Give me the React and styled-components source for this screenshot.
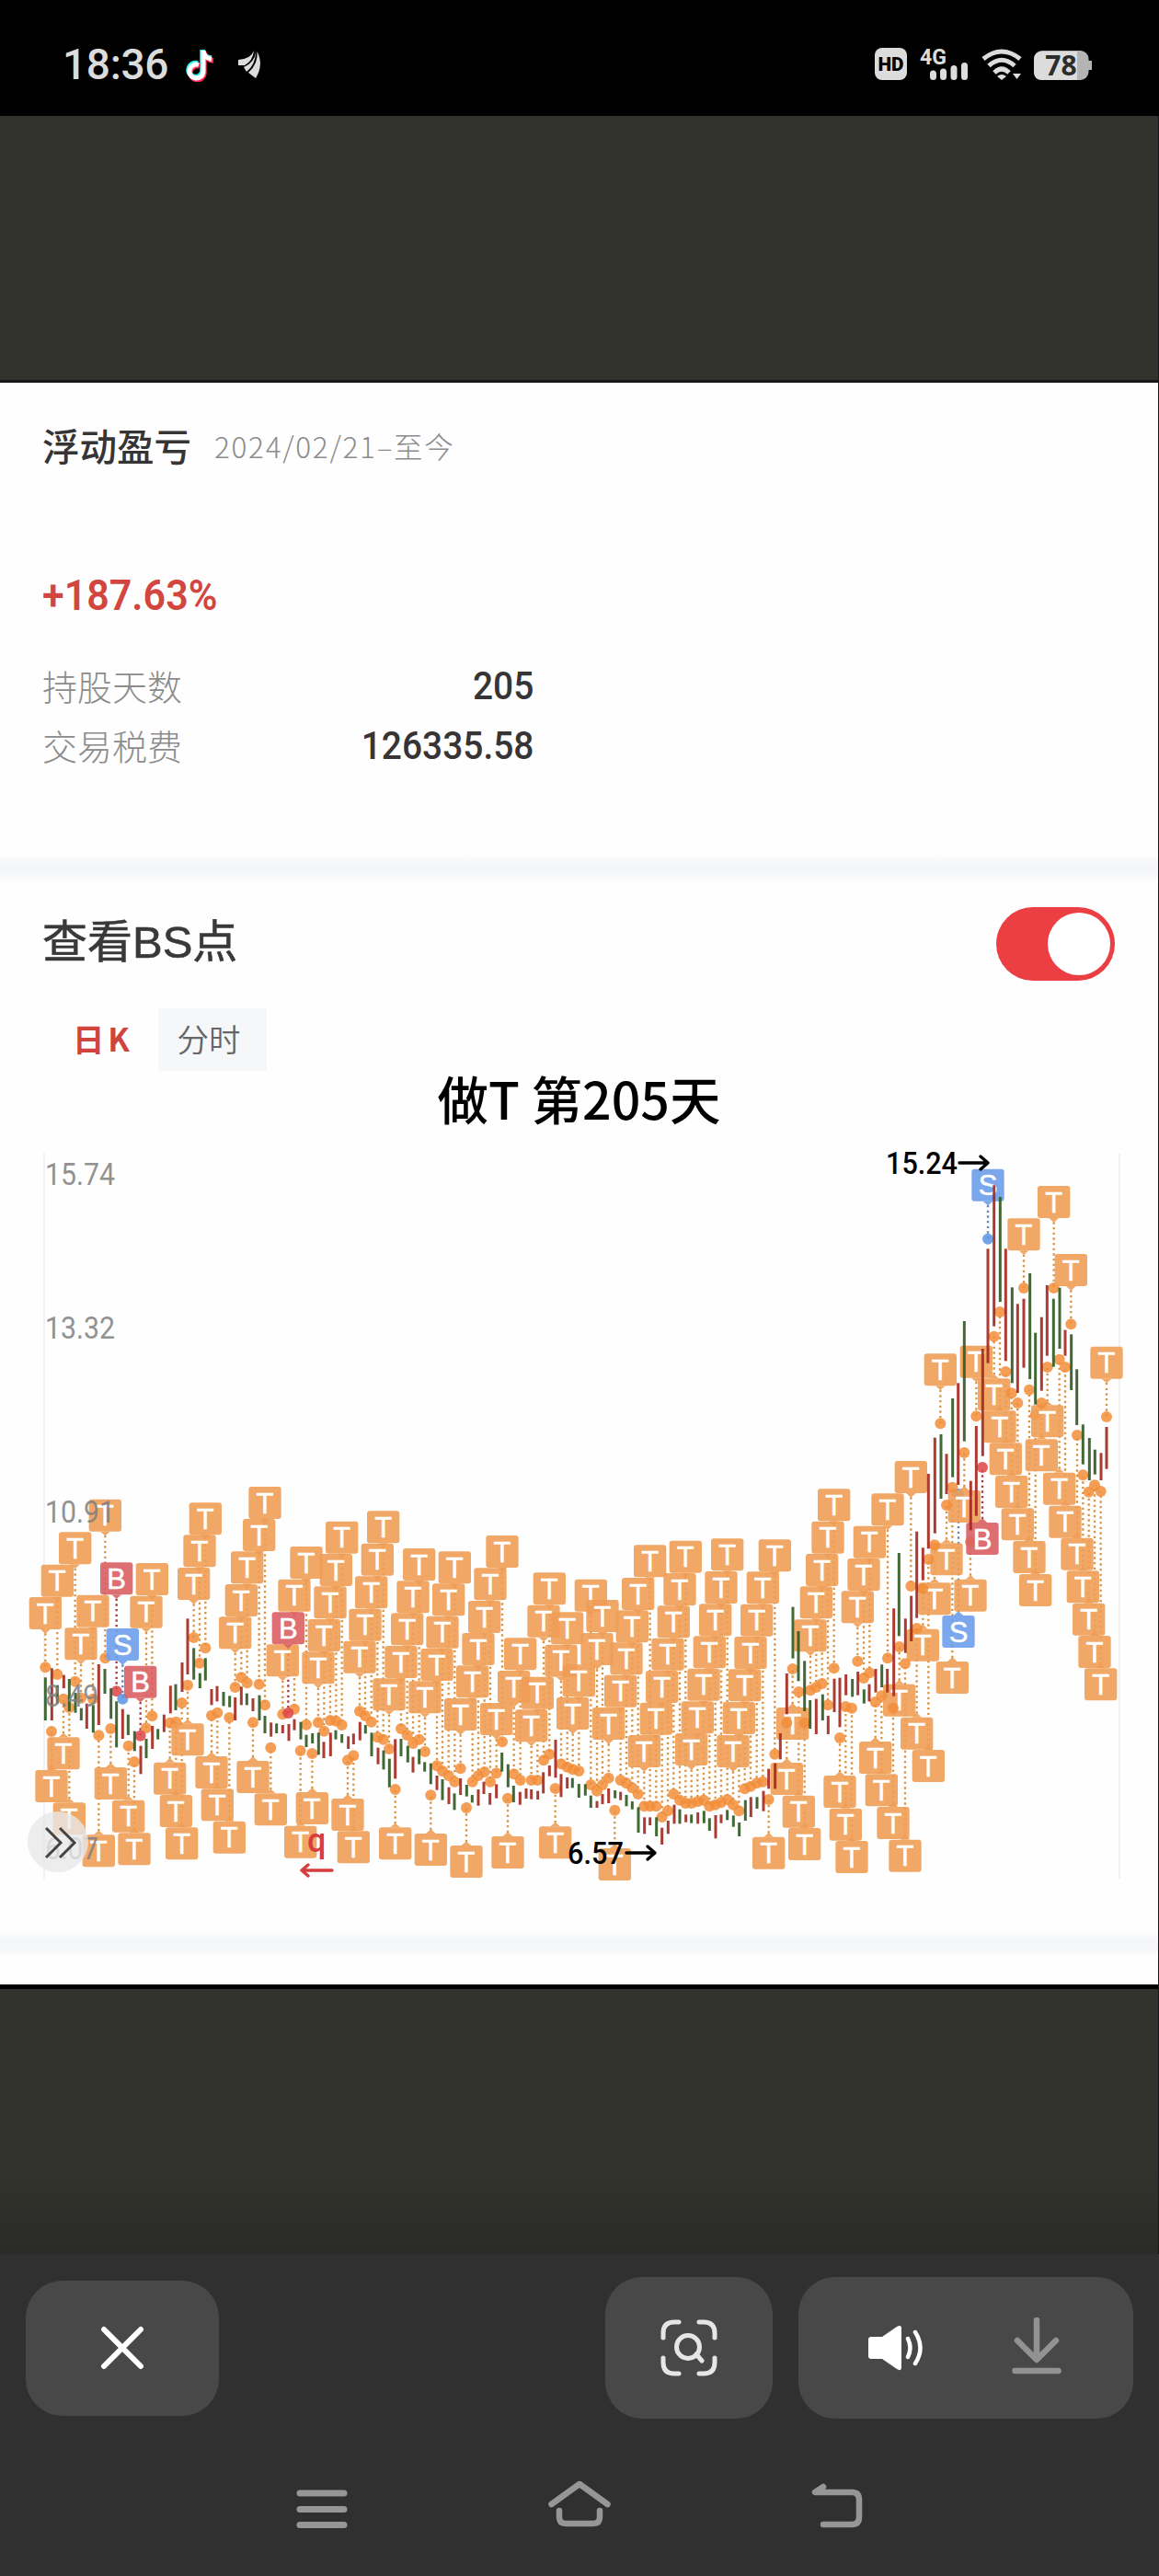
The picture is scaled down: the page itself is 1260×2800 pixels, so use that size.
import React, { useState } from "react";
import styled, { createGlobalStyle } from "styled-components";

const GlobalStyle = createGlobalStyle`
  * {
    box-sizing: border-box;
  }

  body {
    margin: 0;
    background: #303030;
    font-family: Roboto, "Noto Sans CJK SC", sans-serif;
  }
`;

const Screen = styled.div`
  display: flex;
  flex-direction: column;
  width: 1260px;
  height: 2800px;
  overflow: hidden;
  background: #303030;
`;

const StatusBar = styled.header`
  display: flex;
  justify-content: space-between;
  height: 126px;
  padding: 14px 73px 0 68px;
  background: #000;
  color: #dcdcdc;
`;

const StatusGroup = styled.div`
  display: flex;
  align-items: center;
`;

const Clock = styled.span`
  width: 132px;
  font-size: 46px;
  font-weight: 500;
  line-height: 1;
  letter-spacing: -0.3px;
  white-space: nowrap;
`;

const Viewer = styled.main`
  height: 2324px;
  padding-top: 287px;
  border-right: 1px solid #161616;
  background: linear-gradient(#33332e 0, #33332e 2230px, #2a2a26 2324px);
`;

const Sheet = styled.section`
  height: 1749px;
  border-top: 3px solid #17171a;
  border-bottom: 5px solid #000;
  background: #fefefe;
`;

const Summary = styled.section`
  display: flex;
  flex-direction: column;
  height: 513px;
  padding: 40px 0 0 46px;
`;

const Heading = styled.div`
  display: flex;
  align-items: center;
  gap: 25px;
  height: 56px;
`;

const Title = styled.h2`
  margin: 0;
  color: #363435;
  font-family: "Noto Sans CJK SC", sans-serif;
  font-size: 40.5px;
  font-weight: 500;
  line-height: 56px;
`;

const Period = styled.span`
  color: #8c8c8c;
  font-family: "Noto Sans CJK SC", sans-serif;
  font-size: 31.5px;
  font-weight: 300;
  line-height: 52px;
  letter-spacing: 1.7px;
  white-space: nowrap;
`;

const Profit = styled.div`
  margin-top: 107px;
  color: #d2463f;
  font-size: 46px;
  font-weight: 600;
  line-height: 56px;
  transform: scaleX(0.935);
  transform-origin: left;
`;

const Stats = styled.dl`
  display: flex;
  flex-direction: column;
  width: 534px;
  margin: 37px 0 0;
`;

const StatRow = styled.div`
  display: flex;
  justify-content: space-between;
  align-items: center;
  height: 65px;
`;

const StatName = styled.dt`
  color: #8c8c8c;
  font-family: "Noto Sans CJK SC", sans-serif;
  font-size: 38px;
  font-weight: 300;
  line-height: 50px;
`;

const StatValue = styled.dd`
  margin: 0;
  color: #363435;
  font-size: 43px;
  font-weight: 500;
  line-height: 50px;
  transform: scaleX(0.905);
  transform-origin: right;
`;

const Divider = styled.div`
  height: 30px;
  background: linear-gradient(#fefefe, #f4f6f9 35%, #f4f6f9 65%, #fefefe);
`;

const SwitchRow = styled.div`
  display: flex;
  justify-content: space-between;
  align-items: center;
  height: 80px;
  margin-top: 27px;
  padding: 0 47px 0 46px;
`;

const SwitchLabel = styled.h2`
  margin: 0;
  padding-bottom: 4px;
  color: #3a3839;
  font-family: "Liberation Sans", "Noto Sans CJK SC", sans-serif;
  font-size: 49px;
  font-weight: 400;
  line-height: 70px;
  -webkit-text-stroke: 0.6px #3a3839;
`;

const Toggle = styled.button`
  display: flex;
  justify-content: ${({ $on }) => ($on ? "flex-end" : "flex-start")};
  align-items: center;
  width: 129px;
  height: 80px;
  padding: 0 5px;
  border: none;
  border-radius: 40px;
  background: ${({ $on }) => ($on ? "#eb3f43" : "#ccc")};
`;

const Knob = styled.span`
  width: 68px;
  height: 68px;
  border-radius: 50%;
  background: #fff;
`;

const Tabs = styled.div`
  display: flex;
  width: 242px;
  height: 68px;
  margin: 30px 0 0 48px;
  background: #f6f7f9;
`;

const Tab = styled.button`
  width: ${({ $active }) => ($active ? "124px" : "118px")};
  padding: 0 ${({ $active }) => ($active ? "0" : "8px")} 4px 0;
  border: none;
  background: ${({ $active }) => ($active ? "#fefefe" : "transparent")};
  color: ${({ $active }) => ($active ? "#cf453e" : "#666")};
  font-family: "Noto Sans CJK SC", sans-serif;
  font-size: 34.5px;
  font-weight: ${({ $active }) => ($active ? 600 : 350)};
  word-spacing: -4px;
`;

const ChartTitle = styled.h1`
  height: 66px;
  margin: 0;
  color: #000;
  font-family: "Noto Sans CJK SC", sans-serif;
  font-size: 55.5px;
  font-weight: 500;
  line-height: 58px;
  text-align: center;
`;

const Chart = styled.svg`
  display: block;
  width: 1259px;
  height: 868px;
`;

const Toolbar = styled.div`
  display: flex;
  align-items: center;
  gap: 28px;
  height: 204px;
  padding: 0 28px;
`;

const ToolButton = styled.button`
  display: flex;
  justify-content: center;
  align-items: center;
  gap: 93px;
  width: ${({ $width }) => $width}px;
  height: ${({ $height }) => $height || 154}px;
  margin-right: ${({ $push }) => ($push ? "auto" : "0")};
  padding: 0 ${({ $shift }) => $shift || 0}px 0 0;
  border: none;
  border-radius: 40px;
  background: #484848;
`;

const NavBar = styled.nav`
  display: flex;
  justify-content: space-between;
  height: 146px;
  padding: 40px 321px 0;
`;

// Bars are "x low high colour", marks are "kind x box dot".
// Every block uses its own origin and three units per pixel.
const blocks = [
  {
    x: 0,
    y: 330,
    marks: `T 343 209 727,T 245 316 803,T 187 422 780,T 148 528 757,B 380 415 835,T 496 417 916,
      T 303 521 860,T 264 628 857,T 477 524 955,S 400 630 860,B 458 752 980,
      T 670 220 694,T 651 325 743,T 632 432 660,T 864 168 880,T 845 273 812,T 806 379 808,
      T 787 486 790,T 767 592 822,T 207 985 860,T 168 1092 966,T 226 1198 888,T 322 1303 979,
      T 361 1083 957,T 419 1190 1013,T 438 1297 1065,T 554 1067 938,T 574 1173 935,
      T 593 1279 873,T 612 940 815,T 690 1047 914,T 709 1153 905,T 748 1259 921,
      T 825 1062 937,T 883 1168 1019,T 980 1274 1029,T 960 470 893,T 922 682 910,B 940 577 906`,
    bars: `148 790 930 g,169 760 930 r,187 815 875 g,208 782 825 r,226 795 900 g,246 840 905 g,
      265 890 930 g,283 875 957 r,304 880 970 g,322 747 945 r,342 762 843 g,362 825 925 g,
      380 868 1018 g,400 893 990 r,418 911 978 g,439 965 1030 g,459 1013 1105 r,477 990 1053 g,
      497 948 1023 r,515 958 992 g,535 911 968 r,556 817 907 r,573 812 897 g,594 741 837 r,
      612 598 780 r,632 694 797 g,652 776 825 g,670 727 800 g,690 828 880 r,708 818 868 r,
      729 837 883 g,749 850 887 g,767 855 930 r,787 820 880 r,805 842 880 g,825 858 900 r,
      846 848 930 g,864 915 972 g,884 937 983 r,902 940 972 g,922 945 972 r,942 942 997 r,
      960 926 962 r,981 935 992 g`,
  },
  {
    x: 300,
    y: 370,
    marks: `T 99 243 824,T 215 161 825,T 196 267 812,T 177 373 810,T 157 480 845,T 138 586 817,
      T 350 127 872,T 331 233 865,T 311 340 815,T 291 446 795,T 273 551 780,T 467 249 872,
      T 447 355 885,T 428 460 858,T 408 567 837,T 369 673 903,T 583 259 1010,T 563 364 990,
      T 543 470 975,T 525 576 958,T 486 682 912,T 738 207 880,T 699 313 1010,T 680 420 978,
      T 660 525 990,T 641 631 1010,T 602 738 967,T 797 541 1005,T 776 648 985,T 719 753 982,
      T 892 328 920,T 873 434 940,T 853 668 1005,T 833 775 1005,T 950 457 962,T 930 563 952,
      T 968 735 970,T 118 1044 918,T 234 1065 940,T 253 1171 925,T 389 1159 1035,
      T 505 1179 1054,T 621 1218 1095,T 756 1188 1064,T 911 1156 1032`,
    bars: `99 857 897 g,119 852 885 g,139 850 922 g,156 880 933 r,178 850 927 r,195 842 872 g,
      215 855 883 g,236 862 903 r,253 853 888 r,274 815 875 r,292 825 853 g,312 850 927 g,
      333 899 953 r,351 908 970 g,370 935 1028 g,389 871 1000 r,408 870 927 g,430 893 947 g,
      447 929 980 r,467 904 953 g,485 946 977 g,505 950 1018 g,525 990 1037 r,543 1002 1070 g,
      564 1028 1083 r,582 1048 1102 g,602 999 1053 r,622 1020 1058 g,640 1053 1078 g,
      660 1035 1088 r,678 1010 1050 r,698 1047 1085 r,719 1018 1064 r,737 915 977 g,
      757 953 1028 g,775 1023 1077 g,796 1043 1085 r,816 1032 1065 r,833 1035 1067 r,
      854 1040 1068 r,872 979 1048 r,892 957 992 r,912 873 997 r,930 985 1060 r,950 996 1032 r,
      967 998 1030 g,988 1017 1062 g`,
  },
  {
    x: 600,
    y: 370,
    marks: `T 127 350 1020,T 88 628 975,T 165 417 1020,T 147 525 1040,T 320 238 1090,
      T 281 345 1050,T 262 451 1030,T 243 556 1015,T 224 662 1005,T 185 768 998,T 205 1227 1103,
      T 436 224 1080,T 417 330 1070,T 397 436 1050,T 378 542 1105,T 359 648 1125,
      T 340 752 1090,T 301 858 1090,T 572 217 1068,T 552 324 1078,T 533 430 1085,
      T 514 535 1090,T 495 641 1070,T 475 748 1075,T 455 852 1080,T 727 220 920,T 688 325 1010,
      T 668 431 1015,T 648 537 1025,T 629 643 1033,T 610 750 1105,T 591 858 1085,
      T 707 1190 1068,T 785 768 642,T 766 948 818,T 805 1055 717,T 824 1161 818,
      T 920 55 640,T 900 161 760,T 881 267 690,T 862 373 702,T 843 481 712,T 939 990 867,
      T 958 1097 765,T 978 1203 770`,
    bars: `109 1018 1055 g,127 1055 1095 g,147 1073 1095 r,165 1050 1083 r,185 1032 1080 r,
      206 1038 1064 g,224 1043 1070 r,243 1053 1090 g,262 1074 1100 g,282 1093 1176 g,
      302 1126 1180 r,320 1126 1152 r,341 1126 1188 g,359 1160 1215 r,379 1137 1180 r,
      399 1085 1147 r,417 1100 1147 g,437 1117 1142 r,455 1117 1145 g,476 1110 1147 r,
      496 1105 1145 g,514 1129 1170 g,534 1119 1195 r,552 1117 1145 r,572 1102 1135 g,
      592 1120 1157 g,611 1143 1188 g,631 1070 1137 g,649 1060 1125 r,669 1060 1098 g,
      690 1040 1106 r,707 968 1033 r,728 950 1033 r,745 852 937 r,766 657 790 r,786 440 608 g,
      804 519 682 g,824 616 780 g,842 744 837 g,862 740 855 r,883 725 810 g,901 795 855 r,
      921 674 783 r,939 671 832 r,959 660 728 r,980 675 733 g`,
  },
  {
    x: 850,
    y: 370,
    marks: `S 576 468 72,T 345 70 607,T 286 176 655,T 267 282 672,T 247 388 617,T 595 60 -63,
      T 537 232 108,T 498 361 238,T 615 350 228,T 460 512 380,T 383 692 570,T 556 618 50,
      T 440 800 510,T 478 906 285,T 305 879 750,T 325 985 730,T 363 1092 770,T 402 1199 625,
      B 654 165 -15`,
    bars: `248 651 728 r,268 709 755 g,285 692 748 r,306 642 719 r,326 628 702 g,344 642 719 r,
      365 445 731 r,382 264 535 g,403 478 590 r,422 404 552 r,440 194 476 r,460 247 353 r`,
  },
  {
    x: 850,
    y: 0,
    marks: `S 672 122 350,T 887 177 510,T 789 283 510,T 943 399 628,T 1059 701 930,T 517 724 952,
      T 634 698 928,T 421 1074 1482,T 692 805 668,T 711 910 588,T 730 1015 783,T 749 1122 853,
      T 769 1228 885,T 807 1335 842,T 827 1443 925,T 866 892 768,T 847 1003 885,
      T 905 1112 743,T 924 1220 768,T 963 1325 990,T 982 1432 1120,T 1001 1538 1175,
      T 1020 1644 1153,T 1040 1750 1173`,
    bars: `478 1116 1360 r,499 998 1310 r,519 987 1197 g,537 1051 1182 r,557 870 1127 g,
      575 820 1152 r,595 618 1010 g,616 1139 1300 r,634 960 1253 r,655 708 1058 r,
      672 382 755 r,692 175 635 r,712 213 555 g,730 382 748 r,751 508 820 g,769 562 852 r,
      789 545 770 r,809 462 807 g,827 656 890 g,847 605 845 r,865 501 731 r,886 545 767 g,
      906 509 708 g,924 647 731 r,944 661 843 g,962 775 957 g,982 955 1085 g,1003 999 1137 g,
      1021 1037 1118 g,1041 1048 1137 r,1059 963 1100 r`,
  },
];

const axis = [
  { value: "15.74", y: 58 },
  { value: "13.32", y: 225 },
  { value: "10.91", y: 425 },
  { value: "8.49", y: 625 },
  { value: "6.07", y: 791 },
];

const colors = {
  T: { box: "#f09e56", dot: "#f28d38", line: "#d99445" },
  B: { box: "#da6065", dot: "#dc4548", line: "#a83a4c" },
  S: { box: "#6d9fec", dot: "#5b94e4", line: "#6686b8" },
};

const parse = (rows) => rows.split(",").map((row) => row.trim().split(" "));

function Leader({ kind, x, box, dot }) {
  const isAbove = box < dot;
  const edge = isAbove ? box + 118 : box - 12;

  return (
    <line
      x1={x}
      x2={x}
      y1={edge}
      y2={dot}
      stroke={colors[kind].line}
      strokeWidth="7"
      strokeDasharray="7 10"
    />
  );
}

function Mark({ kind, x, box, dot }) {
  const isAbove = box < dot;
  const tip = isAbove
    ? `M${x - 16} ${box + 105}l16 14 16-14z`
    : `M${x - 16} ${box}l16-14 16 14z`;

  return (
    <g>
      <g fill={colors[kind].box} opacity="0.9">
        <rect x={x - 53} y={box} width="106" height="105" rx="9" />
        <path d={tip} />
      </g>
      <circle cx={x} cy={dot} r="18" fill={colors[kind].dot} opacity="0.85" />
      <text
        x={x}
        y={box + 86}
        fill="#fff"
        stroke="#fff"
        strokeWidth="1.5"
        fontFamily="Liberation Sans, Arial, sans-serif"
        fontSize="93"
        textAnchor="middle"
      >
        {kind}
      </text>
    </g>
  );
}

function KLineChart() {
  const groups = blocks.map((block) => ({
    transform: `translate(${block.x} ${block.y}) scale(0.33333)`,
    bars: parse(block.bars),
    marks: parse(block.marks).map(([kind, x, box, dot]) => ({
      kind,
      x: Number(x),
      box: Number(box),
      dot: Number(dot),
    })),
  }));

  return (
    <Chart viewBox="0 0 1259 868">
      <path d="M48 24V812M1217 24V812" stroke="#f1f1f1" strokeWidth="2" />
      {groups.map(({ transform, marks }, index) => (
        <g key={index} transform={transform}>
          {marks.map((mark) => <Leader key={`${mark.x}-${mark.box}`} {...mark} />)}
        </g>
      ))}
      {groups.map(({ transform, marks }, index) => (
        <g key={index} transform={transform}>
          {marks.map((mark) => <Mark key={`${mark.x}-${mark.box}`} {...mark} />)}
        </g>
      ))}
      {groups.map(({ transform, bars }, index) => (
        <g key={index} transform={transform} strokeWidth="9" opacity="0.92">
          {bars.map(([x, low, high, color]) => (
            <path
              key={x}
              d={`M${x} ${low}V${high}`}
              stroke={color === "r" ? "#a52c22" : "#335c26"}
            />
          ))}
        </g>
      ))}
      {axis.map(({ value, y }) => (
        <text
          key={value}
          x="49"
          y={y}
          fill="#808080"
          fontSize="34"
          opacity="0.85"
          textLength={value.length === 5 ? 76 : 58}
          lengthAdjust="spacingAndGlyphs"
        >
          {value}
        </text>
      ))}
      <g fill="none" stroke="#000" strokeWidth="3.4" strokeLinecap="round" strokeLinejoin="round">
        <path d="M1043 34H1074M1066 27L1074 34L1066 41" />
        <path d="M681 784H712M704 777L712 784L704 791" />
        <path d="M361 803H328M335 797L328 803L335 809" stroke="#d83c3f" />
      </g>
      <g fill="#000" fontSize="34" fontWeight="500">
        <text x="963" y="46" textLength="78" lengthAdjust="spacingAndGlyphs">15.24</text>
        <text x="617" y="796" textLength="61" lengthAdjust="spacingAndGlyphs">6.57</text>
        <text x="334" y="783" fill="#d83c3f" fontSize="36">q</text>
      </g>
      <circle cx="63" cy="772" r="33" fill="#e8e8e8" opacity="0.8" />
      <path
        d="M50 757L66 773L50 789M65 757L81 773L65 789"
        fill="none"
        stroke="#444"
        strokeWidth="3"
      />
    </Chart>
  );
}

function StatusIcons() {
  return (
    <svg width="240" height="56" viewBox="948 42 240 56">
      <rect x="952" y="52" width="35" height="35" rx="8" fill="#dcdcdc" />
      <text x="969.5" y="77" fontSize="21" fontWeight="900" textAnchor="middle" textLength="28" lengthAdjust="spacingAndGlyphs" fill="#000">HD</text>
      <text x="1001" y="70" fontSize="24" fontWeight="700" textLength="29" lengthAdjust="spacingAndGlyphs" fill="#dcdcdc">4G</text>
      <path d="M1015.500 80V83.500M1026.500 78V83.500M1038 74.500V83.500M1049.500 71.500V83.500" stroke="#dcdcdc" strokeWidth="7" strokeLinecap="round" />
      <g fill="none" stroke="#dcdcdc" strokeWidth="5">
        <path d="M1070 64Q1090 48 1110 64" />
        <path d="M1076 71.500Q1090 59 1104 71.500" />
        <path d="M1082 79Q1090 71 1098 79" />
      </g>
      <path d="M1085 83Q1090 79 1095 83L1090 87ZM1102 80H1111L1106.500 86Z" fill="#dcdcdc" />
      <rect x="1125" y="55" width="59.500" height="32" rx="9" fill="#b4b4b4" />
      <path d="M1134 56H1172V87H1134Q1125 87 1125 78V65Q1125 56 1134 56Z" fill="#dcdcdc" />
      <path d="M1184 66H1188V76H1184Z" fill="#b4b4b4" />
      <text x="1154.5" y="82" fontFamily="Noto Sans, sans-serif" fontSize="30" fontWeight="700" textAnchor="middle" fill="#2c2c2c">78</text>
    </svg>
  );
}

function App() {
  const [isBsVisible, setIsBsVisible] = useState(true);
  const [activeTab, setActiveTab] = useState("日 K");

  return (
    <Screen>
      <GlobalStyle />
      <StatusBar>
        <StatusGroup>
          <Clock>18:36</Clock>
          <svg width="90" height="38" viewBox="200 50 90 38">
            <g fill="none" strokeWidth="5.500">
              <path d="M215 68A7.500 7.500 0 1 0 220 76V53Q221 61 230 62" stroke="#25f4ee" />
              <path d="M217 71A7.500 7.500 0 1 0 222 78V56Q224 64 232 65" stroke="#fe2c55" />
              <path d="M216 69.500A7.500 7.500 0 1 0 221 77V54Q222 62 230 63.500" stroke="#fff" strokeWidth="5" />
            </g>
            <path
              d="M276 54Q273 63 259 64V70H266Q275 65 276 54ZM278 55Q277 67 265 72L268 77Q278 69 278 55ZM279.500 55Q281 68 270 78L278 84Q287 69 279.500 55Z"
              fill="#dcdcdc"
            />
          </svg>
        </StatusGroup>
        <StatusGroup>
          <StatusIcons />
        </StatusGroup>
      </StatusBar>

      <Viewer>
        <Sheet>
          <Summary>
            <Heading>
              <Title>浮动盈亏</Title>
              <Period>2024/02/21–至今</Period>
            </Heading>
            <Profit>+187.63%</Profit>
            <Stats>
              <StatRow>
                <StatName>持股天数</StatName>
                <StatValue>205</StatValue>
              </StatRow>
              <StatRow>
                <StatName>交易税费</StatName>
                <StatValue>126335.58</StatValue>
              </StatRow>
            </Stats>
          </Summary>
          <Divider />
          <SwitchRow>
            <SwitchLabel>查看BS点</SwitchLabel>
            <Toggle
              type="button"
              $on={isBsVisible}
              onClick={() => setIsBsVisible(!isBsVisible)}
            >
              <Knob />
            </Toggle>
          </SwitchRow>
          <Tabs>
            {["日 K", "分时"].map((name) => (
              <Tab
                key={name}
                type="button"
                $active={name === activeTab}
                onClick={() => setActiveTab(name)}
              >
                {name}
              </Tab>
            ))}
          </Tabs>
          <ChartTitle>做T 第205天</ChartTitle>
          <KLineChart />
          <Divider />
        </Sheet>
      </Viewer>

      <Toolbar>
        <ToolButton type="button" $width={210} $height={147} $push>
          <svg width="50" height="50" viewBox="0 0 50 50">
            <path d="M5 5L45 45M45 5L5 45" stroke="#fff" strokeWidth="6" strokeLinecap="round" />
          </svg>
        </ToolButton>
        <ToolButton type="button" $width={182}>
          <svg width="62" height="62" viewBox="0 0 62 62" fill="none" stroke="#e6e6e6" strokeWidth="5" strokeLinecap="round">
            <path d="M3 20V15Q3 3 15 3H20M42 3H47Q59 3 59 15V20M59 42V47Q59 59 47 59H42M20 59H15Q3 59 3 47V42" />
            <circle cx="30" cy="30" r="12.500" />
            <path d="M39 38L45 45" />
          </svg>
        </ToolButton>
        <ToolButton type="button" $width={364} $shift={4}>
          <svg width="64" height="50" viewBox="0 0 64 50">
            <path d="M4 13H16L32 2Q37-1 37 4V46Q37 51 32 48L16 37H4Q1 37 1 34V16Q1 13 4 13Z" fill="#fff" />
            <path d="M44 15Q49 25 44 35M52 8Q63 25 52 42" fill="none" stroke="#fff" strokeWidth="4.500" strokeLinecap="round" />
          </svg>
          <svg width="54" height="68" viewBox="0 0 54 68" fill="none" stroke="#929292" strokeWidth="6.500" strokeLinecap="round">
            <path d="M27 4V46M6 26L27 47L48 26" strokeLinejoin="round" />
            <path d="M3.500 59H50.500" />
          </svg>
        </ToolButton>
      </Toolbar>

      <NavBar>
        <svg width="58" height="54" viewBox="0 0 58 54">
          <path d="M5 17.500H53M5 35H53M5 52H53" stroke="#969696" strokeWidth="7" strokeLinecap="round" transform="translate(0 -1.500)" />
        </svg>
        <svg width="68" height="54" viewBox="0 0 68 54" fill="none" stroke="#969696" strokeWidth="6.500" strokeLinecap="round">
          <path d="M3.500 28L34 6L64.500 28" strokeLinejoin="round" />
          <path d="M12 35V42Q12 49 19 49H49Q56 49 56 42V35" />
        </svg>
        <svg width="58" height="54" viewBox="0 0 58 54" fill="none" stroke="#969696" strokeWidth="6.500" strokeLinecap="round">
          <path d="M14 9L5 15H45Q53 15 53 23V42Q53 50 45 50H14" strokeLinejoin="round" />
        </svg>
      </NavBar>
    </Screen>
  );
}

export default App;
